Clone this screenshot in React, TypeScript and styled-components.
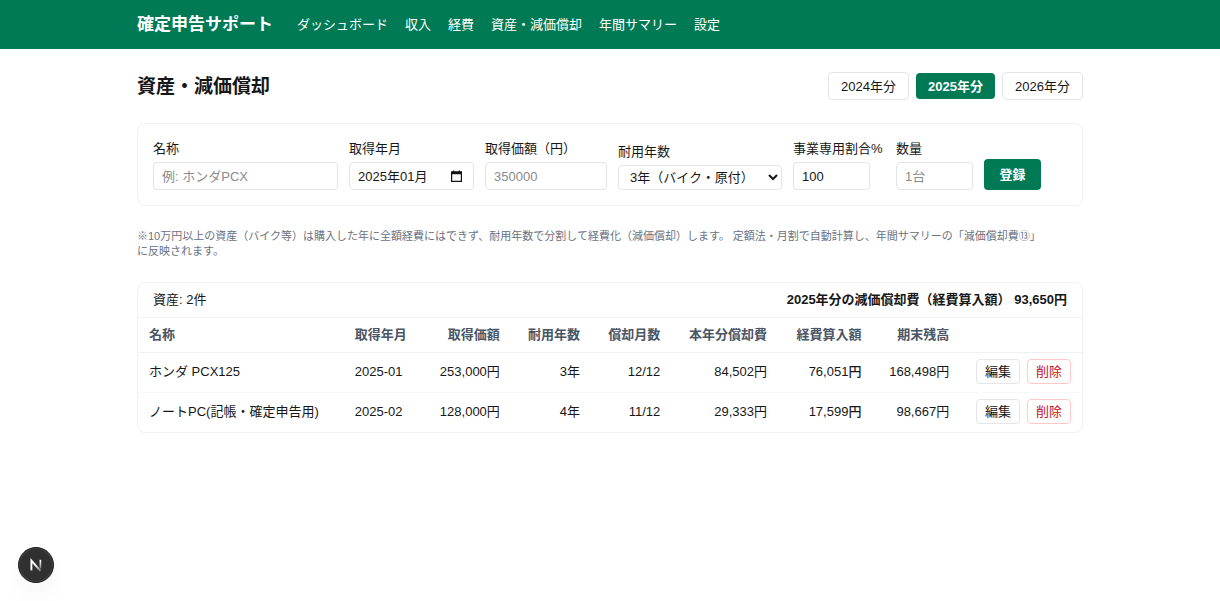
import React, { useState } from "react";
import styled, { createGlobalStyle } from "styled-components";

const green = "#007a55";
const line = "#f0f1f3";
const fieldLine = "#e3e5e8";

const GlobalStyle = createGlobalStyle`
  *, *::before, *::after { box-sizing: border-box; }
  body {
    margin: 0;
    background: #fff;
    color: #171717;
    font-family: "Liberation Sans", "Noto Sans CJK JP", sans-serif;
    font-size: 13px;
    line-height: 19px;
  }
  button, input, select { font: inherit; color: inherit; }
  button { cursor: pointer; }
`;

const Header = styled.header`
  background: ${green};
  color: #fff;
`;

const HeaderInner = styled.div`
  display: flex;
  flex-wrap: wrap;
  align-items: center;
  gap: 24px;
  max-width: 976px;
  margin: 0 auto;
  padding: 11px 15px;
`;

const Brand = styled.a`
  color: inherit;
  font-size: 17px;
  font-weight: 700;
  line-height: 27px;
  text-decoration: none;
`;

const Nav = styled.nav`
  display: flex;
  flex-wrap: wrap;
  gap: 17px;
`;

const NavLink = styled.a`
  color: inherit;
  text-decoration: none;
`;

const Main = styled.main`
  display: flex;
  flex-direction: column;
  gap: 23px;
  max-width: 976px;
  margin: 0 auto;
  padding: 23px 15px;
`;

const TitleRow = styled.div`
  display: flex;
  flex-wrap: wrap;
  align-items: center;
  justify-content: space-between;
`;

const Title = styled.h1`
  margin: 0;
  font-size: 19px;
  font-weight: 700;
  line-height: 27px;
`;

const YearList = styled.div`
  display: flex;
  align-items: center;
  gap: 7px;
`;

const YearButton = styled.button<{ $active: boolean }>`
  min-width: ${(p) => (p.$active ? 79 : 81)}px;
  height: ${(p) => (p.$active ? 26 : 28)}px;
  padding: 0 11px;
  border: ${(p) => (p.$active ? "0" : `1px solid ${fieldLine}`)};
  border-radius: 4px;
  background: ${(p) => (p.$active ? green : "#fff")};
  color: ${(p) => (p.$active ? "#fff" : "inherit")};
  font-weight: ${(p) => (p.$active ? 700 : 400)};
`;

const Form = styled.form`
  display: flex;
  flex-wrap: wrap;
  align-items: flex-end;
  gap: 11px;
  padding: 15px;
  border: 1px solid ${line};
  border-radius: 8px;
`;

const Field = styled.div<{ $width: number }>`
  display: flex;
  flex-direction: column;
  gap: 4px;
  width: ${(p) => p.$width}px;
`;

const FieldLabel = styled.label`
  white-space: nowrap;
`;

const Input = styled.input`
  width: 100%;
  height: 28px;
  padding: 0 8px;
  border: 1px solid ${fieldLine};
  border-radius: 4px;
  background: #fff;
  &::placeholder { color: #8b8b8b; opacity: 1; }
`;

const ShortInput = styled(Input)`
  width: 77px;
`;

const MonthBox = styled.div`
  display: flex;
  align-items: center;
  height: 28px;
  padding-right: 10px;
  border: 1px solid ${fieldLine};
  border-radius: 4px;
`;

const MonthInput = styled.input`
  flex: 1;
  min-width: 0;
  padding: 0 0 0 8px;
  border: 0;
  background: transparent;
`;

const PickerButton = styled.button`
  display: flex;
  padding: 0;
  border: 0;
  background: transparent;
`;

const Select = styled.select`
  width: 100%;
  height: 25px;
  padding: 0 0 0 7px;
  border: 1px solid ${fieldLine};
  border-radius: 4px;
  background: #fff;
`;

const SubmitButton = styled.button`
  width: 57px;
  height: 31px;
  padding: 0 0 1px;
  border: 0;
  border-radius: 4px;
  background: ${green};
  color: #fff;
  font-weight: 700;
`;

const Note = styled.p`
  margin: 0;
  padding-right: 40px;
  color: #6a7282;
  font-size: 11px;
  line-height: 15px;
`;

const Panel = styled.section`
  border: 1px solid ${line};
  border-radius: 8px;
  overflow: hidden;
`;

const PanelHead = styled.div`
  display: flex;
  justify-content: space-between;
  padding: 7px 15px 8px;
  border-bottom: 1px solid ${line};
`;

const Total = styled.span`
  font-weight: 700;
`;

const Table = styled.table`
  width: 100%;
  table-layout: fixed;
  border-collapse: collapse;
`;

const Th = styled.th<{ $width: string; $left?: boolean }>`
  width: ${(p) => p.$width};
  height: 34px;
  padding: 0 11px 1px;
  color: #4a5565;
  font-weight: 700;
  text-align: ${(p) => (p.$left ? "left" : "right")};
  white-space: nowrap;
`;

const Row = styled.tr`
  border-top: 1px solid ${line};
  & + & { border-top-color: #f7f8f9; }
`;

const Td = styled.td<{ $left?: boolean; $medium?: boolean }>`
  height: 40px;
  padding: 0 11px 1px;
  font-weight: ${(p) => (p.$medium ? 500 : 400)};
  text-align: ${(p) => (p.$left ? "left" : "right")};
  white-space: nowrap;
`;

const Actions = styled.div`
  display: flex;
  justify-content: flex-end;
  gap: 7px;
`;

const ActionButton = styled.button<{ $danger?: boolean }>`
  width: 44px;
  height: 25px;
  padding: 0 0 1px;
  border: 1px solid ${(p) => (p.$danger ? "#ffc9c9" : fieldLine)};
  border-radius: 4px;
  background: #fff;
  color: ${(p) => (p.$danger ? "#c8141c" : "inherit")};
`;

const DevBadge = styled.button`
  position: fixed;
  left: 18px;
  bottom: 18px;
  display: flex;
  align-items: center;
  justify-content: center;
  width: 36px;
  height: 36px;
  padding: 0;
  border: 1px solid #1c1c1c;
  border-radius: 50%;
  background: #303030;
  box-shadow: inset 0 0 0 1px #444, 0 12px 26px -4px rgba(0, 0, 0, 0.06);
`;

const years = [2024, 2025, 2026];
const links = ["ダッシュボード", "収入", "経費", "資産・減価償却", "年間サマリー", "設定"];
const note =
  "※10万円以上の資産（バイク等）は購入した年に全額経費にはできず、耐用年数で分割して経費化（減価償却）します。 定額法・月割で自動計算し、年間サマリーの「減価償却費⑬」に反映されます。";

const assets = [
  { name: "ホンダ PCX125", date: "2025-01", price: "253,000円", life: "3年", months: "12/12", amount: "84,502円", expense: "76,051円", balance: "168,498円" },
  { name: "ノートPC(記帳・確定申告用)", date: "2025-02", price: "128,000円", life: "4年", months: "11/12", amount: "29,333円", expense: "17,599円", balance: "98,667円" },
];

function CalendarIcon() {
  return (
    <svg width="13" height="13" viewBox="0 0 13 13" aria-hidden="true">
      <path d="M1.6 2.1h9.8v9.3H1.6z" fill="none" stroke="#111" strokeWidth="1.2" />
      <path d="M1 1.5h11v2.8H1zM3 .4h1.2v1.6H3zM8.8 .4H10v1.6H8.8z" fill="#111" />
    </svg>
  );
}

function NextMark() {
  return (
    <svg width="16" height="16" viewBox="0 0 16 16" fill="none" aria-hidden="true">
      <defs>
        <linearGradient id="diag" x1="8" y1="8" x2="13" y2="15" gradientUnits="userSpaceOnUse">
          <stop stopColor="#fff" />
          <stop offset="1" stopColor="#fff" stopOpacity="0.2" />
        </linearGradient>
        <linearGradient id="stem" x1="12" y1="4" x2="12" y2="13" gradientUnits="userSpaceOnUse">
          <stop stopColor="#fff" />
          <stop offset="1" stopColor="#fff" stopOpacity="0.2" />
        </linearGradient>
      </defs>
      <path d="M3.4 13.5V3.6L12.6 14.2" stroke="url(#diag)" strokeWidth="1.9" />
      <path d="M12.4 2.8v8.8" stroke="url(#stem)" strokeWidth="1.7" />
    </svg>
  );
}

export default function App() {
  const [year, setYear] = useState(2025);

  return (
    <>
      <GlobalStyle />
      <Header>
        <HeaderInner>
          <Brand href="#">確定申告サポート</Brand>
          <Nav>
            {links.map((label) => (
              <NavLink key={label} href="#">{label}</NavLink>
            ))}
          </Nav>
        </HeaderInner>
      </Header>

      <Main lang="ja">
        <TitleRow>
          <Title>資産・減価償却</Title>
          <YearList>
            {years.map((y) => (
              <YearButton key={y} type="button" $active={y === year} onClick={() => setYear(y)}>
                {`${y}年分`}
              </YearButton>
            ))}
          </YearList>
        </TitleRow>

        <Form onSubmit={(e) => e.preventDefault()}>
          <Field $width={185}>
            <FieldLabel htmlFor="name">名称</FieldLabel>
            <Input id="name" placeholder="例: ホンダPCX" />
          </Field>
          <Field $width={125}>
            <FieldLabel htmlFor="month">取得年月</FieldLabel>
            <MonthBox>
              <MonthInput id="month" defaultValue="2025年01月" />
              <PickerButton type="button" aria-label="年月を選択">
                <CalendarIcon />
              </PickerButton>
            </MonthBox>
          </Field>
          <Field $width={122}>
            <FieldLabel htmlFor="price">取得価額（円）</FieldLabel>
            <Input id="price" inputMode="numeric" placeholder="350000" />
          </Field>
          <Field $width={164}>
            <FieldLabel htmlFor="life">耐用年数</FieldLabel>
            <Select id="life" defaultValue="3">
              <option value="3">3年（バイク・原付）</option>
              <option value="4">4年</option>
            </Select>
          </Field>
          <Field $width={92}>
            <FieldLabel htmlFor="ratio">事業専用割合%</FieldLabel>
            <ShortInput id="ratio" inputMode="numeric" defaultValue="100" />
          </Field>
          <Field $width={77}>
            <FieldLabel htmlFor="quantity">数量</FieldLabel>
            <ShortInput id="quantity" placeholder="1台" />
          </Field>
          <SubmitButton type="submit">登録</SubmitButton>
        </Form>

        <Note>{note}</Note>

        <Panel>
          <PanelHead>
            <span>資産: 2件</span>
            <Total>2025年分の減価償却費（経費算入額） 93,650円</Total>
          </PanelHead>
          <Table>
            <thead>
              <tr>
                <Th $width="21.8%" $left>名称</Th>
                <Th $width="8.5%" $left>取得年月</Th>
                <Th $width="9.2%">取得価額</Th>
                <Th $width="8.5%">耐用年数</Th>
                <Th $width="8.5%">償却月数</Th>
                <Th $width="11.3%">本年分償却費</Th>
                <Th $width="10%">経費算入額</Th>
                <Th $width="9.3%">期末残高</Th>
                <Th $width="12.9%" aria-label="操作" />
              </tr>
            </thead>
            <tbody>
              {assets.map((a) => (
                <Row key={a.name}>
                  <Td $left>{a.name}</Td>
                  <Td $left>{a.date}</Td>
                  <Td>{a.price}</Td>
                  <Td>{a.life}</Td>
                  <Td>{a.months}</Td>
                  <Td>{a.amount}</Td>
                  <Td $medium>{a.expense}</Td>
                  <Td>{a.balance}</Td>
                  <Td>
                    <Actions>
                      <ActionButton type="button">編集</ActionButton>
                      <ActionButton type="button" $danger>削除</ActionButton>
                    </Actions>
                  </Td>
                </Row>
              ))}
            </tbody>
          </Table>
        </Panel>
      </Main>

      <DevBadge type="button" aria-label="開発ツール">
        <NextMark />
      </DevBadge>
    </>
  );
}
